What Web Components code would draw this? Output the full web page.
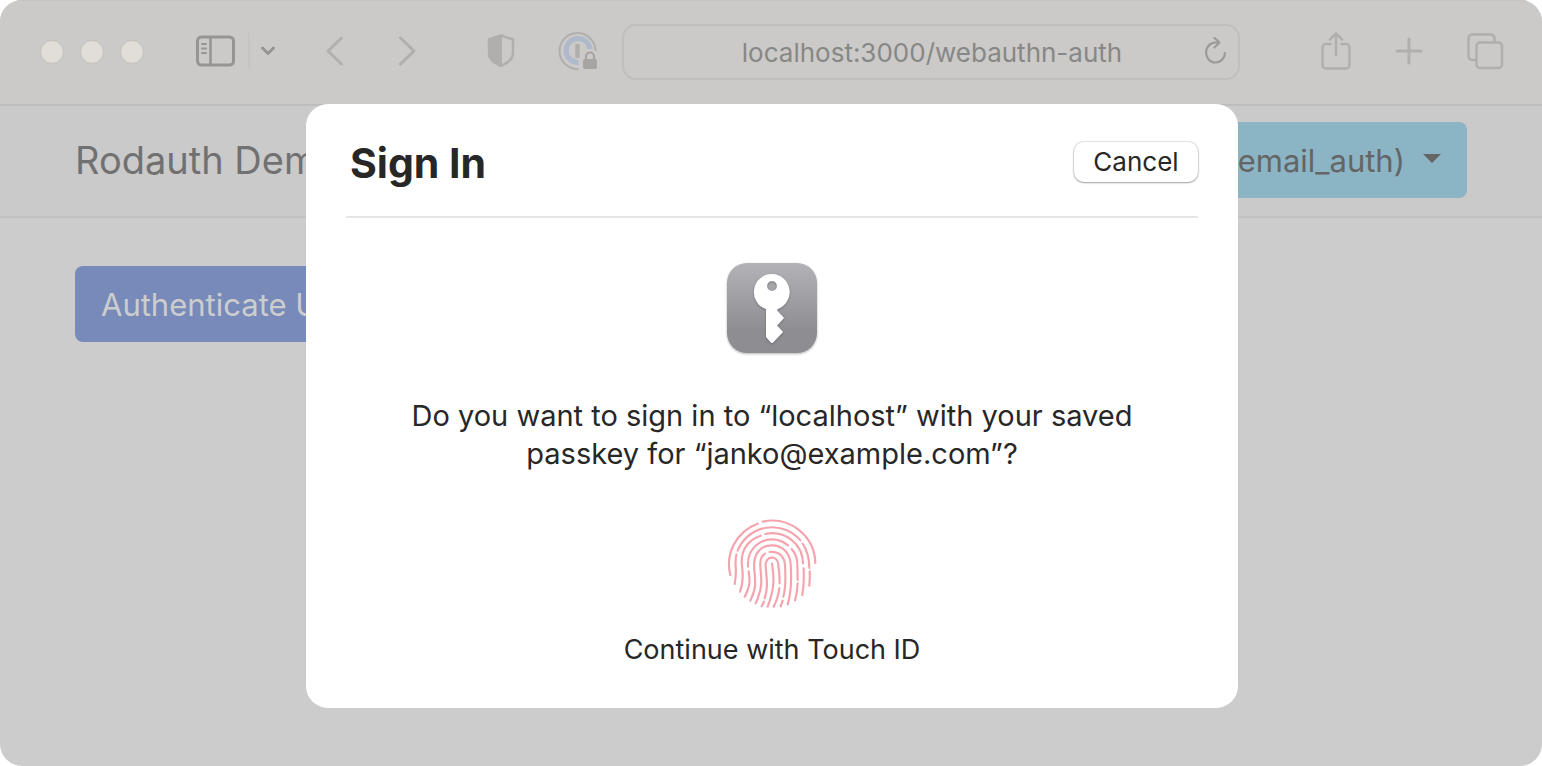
<!DOCTYPE html>
<html lang="en">
<head>
<meta charset="utf-8">
<meta name="viewport" content="width=device-width, initial-scale=1">
<title>Rodauth Demo</title>
<style>
  body { margin: 0; background: #fff; font-family: Inter, "Liberation Sans", sans-serif; }
</style>
</head>
<body>
<browser-window>
  <browser-toolbar slot="toolbar" url="localhost:3000/webauthn-auth"></browser-toolbar>
  <site-navbar brand="Rodauth Demo">(email_auth)</site-navbar>
  <page-content><primary-button>Authenticate Using WebAuthn</primary-button></page-content>
  <signin-dialog slot="dialog" heading="Sign In">
    Do you want to sign in to “localhost” with your saved passkey for “janko@example.com”?
    <span slot="action">Continue with Touch ID</span>
  </signin-dialog>
</browser-window>

<script>
function define(name, render) {
  customElements.define(name, class extends HTMLElement {
    constructor() {
      super();
      this.attachShadow({ mode: 'open' });
    }
    connectedCallback() {
      this.shadowRoot.innerHTML = render(this);
    }
  });
}

define('browser-window', () => `
  <style>
    :host { display: flex; flex-direction: column; position: relative; min-height: 100vh; background: #ccc; border-radius: 22px; overflow: hidden; }
    main { flex: 1; display: flex; flex-direction: column; }
    .sheet { position: absolute; top: 104px; left: 2px; right: 0; display: flex; justify-content: center; }
  </style>
  <slot name="toolbar"></slot>
  <main><slot></slot></main>
  <div class="sheet"><slot name="dialog"></slot></div>`);

define('browser-toolbar', el => `
  <style>
    :host { display: grid; grid-template-columns: minmax(0, 622fr) minmax(0, 618fr) minmax(0, 302fr); align-items: center; height: 104px; box-sizing: border-box; padding-bottom: 1px; background: #cbcac8; border-top: 1px solid #c5c4c2; color: #b0afad; }
    .left, .right { display: flex; align-items: center; padding-bottom: 2px; }
    .left { padding-left: 40px; }
    .right { justify-content: flex-end; gap: 42px; padding-right: 36px; }
    .lights { display: flex; gap: 16px; margin-right: 52px; padding-top: 2px; }
    .lights i { width: 24px; height: 24px; border-radius: 50%; background: #e1ddd9; box-sizing: border-box; border: 1px solid #c3bfbb; }
    button { display: flex; padding: 0; border: 0; background: none; color: inherit; flex: none; }
    .dark { color: #969593; }
    .divider { width: 2px; height: 36px; background: #c5c4c2; margin: 0 10px 0 12px; }
    svg { display: block; fill: none; stroke: currentColor; stroke-width: 3; stroke-linecap: round; stroke-linejoin: round; }
    .back, .fwd { margin-left: 48px; }
    .shield { margin-left: 66px; }
    .pass { margin-left: 42px; }
    .address { position: relative; display: flex; align-items: center; height: 56px; box-sizing: border-box; border: 2px solid #c0bfbd; border-radius: 14px; }
    input { flex: 1; min-width: 0; border: 0; background: none; outline: 0; padding: 2px 0 0 2px; font: 26px/32px Inter, "Liberation Sans", sans-serif; color: #878786; text-align: center; }
    .address button { position: absolute; right: 10px; color: #9b9a98; }
  </style>
  <div class="left">
    <div class="lights"><i></i><i></i><i></i></div>
    <button class="dark" aria-label="Sidebar"><svg width="40" height="32" viewBox="0 0 40 32"><rect x="1.500" y="2" width="36" height="28" rx="4"/><path d="M14.500 2v28" stroke-width="2.500"/><path d="M6 9h4M6 13.500h4M6 18h4" stroke-width="2"/></svg></button>
    <span class="divider"></span>
    <button class="dark" aria-label="Tab groups"><svg width="16" height="12" viewBox="0 0 16 12"><path d="M2.500 3l5.500 5.500L13.500 3"/></svg></button>
    <button class="back" aria-label="Back"><svg width="24" height="32" viewBox="0 0 24 32"><path d="M17.500 3L4 16l13.500 13"/></svg></button>
    <button class="fwd" aria-label="Forward"><svg width="24" height="32" viewBox="0 0 24 32"><path d="M4.500 3L18 16 4.500 29"/></svg></button>
    <button class="shield" aria-label="Privacy report"><svg width="30" height="36" viewBox="0 0 30 36"><path d="M15 2.500L27 6.500V20c0 6-4 9-12 13C7 29 3 26 3 20V6.500z" stroke-width="2.500"/><path d="M15 2.500v30.500C7 29 3 26 3 20V6.500z" fill="currentColor" stroke-width="2"/></svg></button>
    <button class="pass" aria-label="Password manager"><svg width="40" height="40" viewBox="0 0 40 40"><path d="M20.500 38A18 18 0 1 1 37.500 20" stroke-width="2" stroke-linecap="butt"/><path d="M20.500 31.500A12 12 0 1 1 32 18" stroke="#aeb9cc" stroke-width="5" stroke-linecap="butt"/><path d="M19.500 13v14" stroke-width="4.500" stroke-linecap="butt"/><rect x="25" y="28" width="14" height="10" rx="2" fill="#a6a5a3" stroke="none"/><path d="M28 29v-3.500a4 4 0 0 1 8 0V29" stroke="#a6a5a3" stroke-width="2.200"/></svg></button>
  </div>
  <div class="address">
    <input type="text" aria-label="Address" value="${el.getAttribute('url')}">
    <button aria-label="Reload"><svg width="26" height="32" viewBox="0 0 26 32"><path d="M15 6.500H13.500A9.500 10 0 1 0 23 17" stroke-width="2.200"/><path d="M12.500 2l5 4.500-5 5" stroke-width="2.200"/></svg></button>
  </div>
  <div class="right">
    <button aria-label="Share"><svg width="32" height="40" viewBox="0 0 32 40"><path d="M10.500 13H6a3.500 3.500 0 0 0-3.500 3.500V34A3.500 3.500 0 0 0 6 37.500h20a3.500 3.500 0 0 0 3.500-3.500V16.500A3.500 3.500 0 0 0 26 13h-4.500M16 24V3M10 8.500L16 2.500l6 6" stroke-width="2.500"/></svg></button>
    <button aria-label="New tab"><svg width="30" height="30" viewBox="0 0 30 30"><path d="M15 3v24M3 15h24"/></svg></button>
    <button aria-label="Tabs"><svg width="40" height="38" viewBox="0 0 40 38"><path d="M10 28H6.500A4 4 0 0 1 2.500 24V6A4 4 0 0 1 6.500 2.500h18A4 4 0 0 1 28.500 6v3.500" stroke-width="2.500"/><rect x="10.500" y="10.500" width="25.500" height="25.500" rx="3.500" stroke-width="2.500"/></svg></button>
  </div>`);

define('site-navbar', el => `
  <style>
    :host { display: flex; align-items: center; justify-content: space-between; height: 114px; box-sizing: border-box; padding: 0 75px; background: #cacaca; border-top: 2px solid #bbbebd; border-bottom: 2px solid #c1c1c1; }
    a { color: #717171; text-decoration: none; font-size: 38px; line-height: 48px; padding-bottom: 2px; }
    button { display: flex; align-items: center; gap: 18px; height: 76px; padding: 2px 26px 0; margin: 0 0 2px; border: 0; border-radius: 8px; background: #8bb4c4; color: #656565; font: 31px/48px Inter, "Liberation Sans", sans-serif; white-space: nowrap; }
    button::after { content: ""; border: 9px solid transparent; border-top-color: currentColor; border-bottom: 0; margin-bottom: 6px; }
  </style>
  <a href="#">${el.getAttribute('brand')}</a>
  <button><slot></slot></button>`);

define('page-content', () => `
  <style>:host { display: block; padding: 48px 75px; }</style>
  <slot></slot>`);

define('primary-button', () => `
  <style>
    :host { display: block; }
    button { height: 76px; padding: 2px 26px 0; border: 0; border-radius: 8px; background: #778aba; color: #cdcdcd; font: 31px/48px Inter, "Liberation Sans", sans-serif; }
  </style>
  <button><slot></slot></button>`);

define('key-icon', () => `
  <style>:host, svg { display: block; }</style>
  <svg width="96" height="96" viewBox="0 0 96 96" aria-hidden="true">
    <defs>
      <linearGradient id="g" x1="0" y1="0" x2="0" y2="1"><stop offset="0" stop-color="#b3b2b7"/><stop offset=".75" stop-color="#8e8d92"/><stop offset="1" stop-color="#8e8d92"/></linearGradient>
      <filter id="s" x="-10%" y="-10%" width="120%" height="120%"><feDropShadow dx="0" dy="1" stdDeviation="1" flood-opacity=".3"/></filter>
    </defs>
    <rect x="3" y="3" width="90" height="90" rx="20" fill="url(#g)" filter="url(#s)"/>
    <path filter="url(#s)" fill="#fff" fill-rule="evenodd" d="M48 14a18 18 0 0 1 5.500 35l-.5 1.500 7 7.500-7 7.500 6 6.500L49 82.500q-1 1-2 0L42 77V49A18 18 0 0 1 48 14zm0 7a5 5 0 1 0 0 10 5 5 0 0 0 0-10z"/>
  </svg>`);

define('touch-id-icon', () => `
  <style>:host, svg { display: block; }</style>
  <svg width="90" height="90" viewBox="30 27 270 270" fill="none" stroke="#f5a3ad" stroke-width="6.500" stroke-linecap="round" aria-hidden="true">
    <path d="M40 195A130 130 0 0 1 122 41M137 35A130 130 0 0 1 295 159"/>
    <path d="M62 122A111 111 0 0 1 250 91M257 101Q277 131 277 174M278 184Q279 206 277 227M58 134C51 161 62 180 53 222"/>
    <path d="M145 72A92 92 0 0 1 258 160M260 175Q262 219 256 255M131 77C91 91 74 122 74 157C75 177 84 207 69 245"/>
    <path d="M93 170C89 108 139 88 165 88Q192 88 213 106M224 117Q241 137 241 163L242 210M242 220Q241 248 234 271M95 184C98 210 102 224 83 260"/>
    <path d="M100 272C116 237 116 225 113 190C105 134 127 106 165 106C197 106 220 130 221 163Q226 237 212 283"/>
    <path d="M144 131C128 141 129 158 130 169C133 208 137 227 123 262M123 264L116 280M158 126C186 122 203 141 204 166Q208 229 199 260M197 272L191 289"/>
    <path d="M134 289L141 275M143 265C154 230 149 207 146 170C142 135 184 134 184 165Q188 192 188 220M187 235Q183 265 170 290M165 161C171 202 174 234 152 290"/>
  </svg>`);

define('signin-dialog', el => `
  <style>
    :host { display: block; box-sizing: border-box; width: 932px; max-width: 100%; padding: 0 40px 39px; border-radius: 22px; background: #fff; color: #272727; }
    header { display: flex; align-items: center; justify-content: space-between; height: 114px; box-sizing: border-box; padding: 3px 0 0 4px; border-bottom: 2px solid #e5e5e5; }
    h1 { margin: 0; font-size: 41px; line-height: 52px; font-weight: 700; padding-top: 3px; }
    header button { width: 124px; height: 40px; padding: 0; border: 0; border-radius: 10px; background: #fff; box-shadow: 0 0 1px 1px rgba(0,0,0,.1), 0 1px 2px rgba(0,0,0,.3); font: 26px/32px Inter, "Liberation Sans", sans-serif; color: #272727; }
    section { display: flex; flex-direction: column; align-items: center; text-align: center; font-size: 29px; line-height: 38px; }
    key-icon { margin-top: 42px; }
    p { margin: 41px 0 46px; width: 740px; max-width: 100%; }
    .touch { display: flex; flex-direction: column; align-items: center; gap: 22px; padding: 0; border: 0; background: none; color: inherit; font: 27px/38px Inter, "Liberation Sans", sans-serif; }
  </style>
  <header><h1>${el.getAttribute('heading')}</h1><button>Cancel</button></header>
  <section>
    <key-icon></key-icon>
    <p><slot></slot></p>
    <button class="touch"><touch-id-icon></touch-id-icon><slot name="action"></slot></button>
  </section>`);
</script>
</body>
</html>
